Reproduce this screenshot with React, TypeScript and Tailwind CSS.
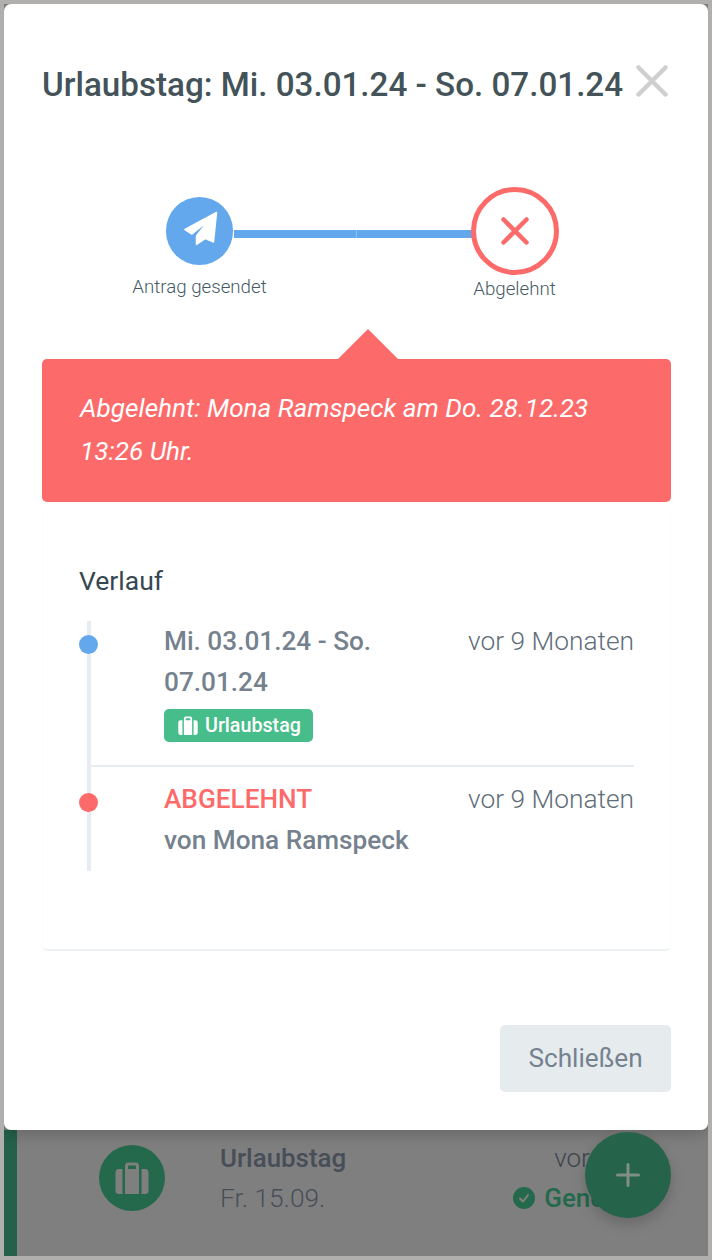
import { Plus } from "lucide-react";

function Suitcase({ className }: { className?: string }) {
  return (
    <svg viewBox="0 0 34 32" className={className} fill="currentColor">
      <path d="M10 4a3.5 3.5 0 0 1 3.5-3.5h7A3.5 3.5 0 0 1 24 4v28H10V4Zm3 .5V7h8V4.500a1 1 0 0 0-1-1h-6a1 1 0 0 0-1 1Z" fillRule="evenodd" />
      <path d="M7.500 7v25H4a3.500 3.500 0 0 1-3.500-3.500v-18A3.500 3.500 0 0 1 4 7h3.500ZM26.500 7H30a3.500 3.500 0 0 1 3.500 3.500v18A3.500 3.500 0 0 1 30 32h-3.500V7Z" />
    </svg>
  );
}

function PaperPlane() {
  return (
    <svg viewBox="0 0 36 36" className="mb-[5px] h-[36px] w-[36px]" fill="white" stroke="white" strokeWidth="1.500" strokeLinejoin="round">
      <path d="M34.500 2.500 3 19.500 10 24 26 11 14.500 26 14.500 34.500 23.500 28.500 31.500 32Z" />
    </svg>
  );
}

function HistoryRow({
  dot,
  children,
}: {
  dot: string;
  children: React.ReactNode;
}) {
  return (
    <div className="relative flex justify-between pl-[73px]">
      <div className={`absolute -left-[12px] top-[14px] h-[19px] w-[19px] rounded-full ${dot}`} />
      {children}
    </div>
  );
}

export default function App() {
  return (
    <div className="flex h-[1260px] w-[712px] flex-col overflow-hidden border-4 border-[#b1aeae] bg-[#7f7f7f] font-['Roboto',sans-serif]">
      {/* Modal */}
      <div className="relative z-10 flex h-[1126px] shrink-0 flex-col rounded-[7px] bg-white pl-[38px] pr-[37px] shadow-[0_4px_16px_rgba(0,0,0,0.2)]">
        <div className="flex items-start justify-between pt-[59px]">
          <h2 className="text-[33.2px] font-medium leading-[44px] whitespace-nowrap text-[#435359]">
            Urlaubstag: Mi. 03.01.24 - So. 07.01.24
          </h2>
          <svg viewBox="0 0 32 32" className="mr-[3px] mt-[2px] h-[32px] w-[32px] shrink-0" stroke="#cfcfcf" strokeWidth="4.500" strokeLinecap="round">
            <path d="M2.500 2.500 29.500 29.500M29.500 2.500 2.500 29.500" />
          </svg>
        </div>

        {/* Steps */}
        <div className="ml-[90.5px] mt-[80px] flex h-[119px]">
          <div className="flex w-[134px] flex-col items-center pt-[10px]">
            <div className="flex h-[67.5px] w-[67.5px] items-center justify-center rounded-full bg-[#63a8ec]">
              <PaperPlane />
            </div>
            <span className="mt-[10px] text-[18.7px] font-light leading-[24px] whitespace-nowrap text-[#455a64]">Antrag gesendet</span>
          </div>
          <div className="mx-[-33px] mt-[43px] flex h-[8px] w-[270px] shrink-0 bg-[#63a8ec]">
            <div className="ml-[122px] h-full w-px bg-[#8fc0f0]" />
          </div>
          <div className="z-10 flex w-[88px] flex-col items-center">
            <div className="flex h-[88px] w-[88px] items-center justify-center rounded-full border-[5px] border-[#fd6a6a] bg-white">
              <svg viewBox="0 0 28 28" className="h-[28px] w-[28px]" stroke="#fd6a6a" strokeWidth="4.500" strokeLinecap="round">
                <path d="M2.500 2.500 25.500 25.500M25.500 2.500 2.500 25.500" />
              </svg>
            </div>
            <span className="mt-[2px] text-[18.7px] font-light leading-[24px] whitespace-nowrap text-[#455a64]">Abgelehnt</span>
          </div>
        </div>

        {/* Rejected box */}
        <div className="relative mt-[53px] h-[143px] rounded-[5px] bg-[#fd6a6a] px-[38px] pt-[28px] text-[26.15px] italic leading-[43px] text-white">
          <div className="absolute -top-[30px] left-[296px] h-0 w-0 border-x-[30px] border-b-[30px] border-x-transparent border-b-[#fd6a6a]" />
          Abgelehnt: Mona Ramspeck am Do. 28.12.23
          <br />
          13:26 Uhr.
        </div>

        {/* History card */}
        <div className="mt-[3px] h-[446px] rounded-[5px] border-x border-b-2 border-x-[#fcfcfd] border-b-[#eef1f3] pl-[36px] pr-[36px] pt-[58px]">
          <h3 className="text-[26.5px] leading-[36px] text-[#37474f]">Verlauf</h3>
          <div className="relative ml-[8px] mt-[22px] h-[250px] border-l-4 border-[#e6ecef]">
            <HistoryRow dot="bg-[#63a8ec]">
              <div className="w-[230px] text-[26.2px] font-medium leading-[41px] text-[#75828e]">
                Mi. 03.01.24 - So. 07.01.24
                <div className="mt-[6px] flex h-[33px] w-[149px] items-center gap-[7px] rounded-[5px] bg-[#46bd8a] pl-[14px] text-[19.7px] font-medium leading-none text-white">
                  <Suitcase className="h-[19px] w-[20px]" />
                  Urlaubstag
                </div>
              </div>
              <span className="text-[26.3px] font-light leading-[41px] whitespace-nowrap text-[#5f6e7a]">vor 9 Monaten</span>
            </HistoryRow>
            <div className="mt-[23px] h-[2px] bg-[#e6ecef]" />
            <div className="pt-[12px]">
              <HistoryRow dot="bg-[#fd6a6a]">
                <div className="text-[26.2px] font-medium leading-[41px] text-[#75828e]">
                  <div className="text-[#fd6a6a]">ABGELEHNT</div>
                  von Mona Ramspeck
                </div>
                <span className="text-[26.3px] font-light leading-[41px] whitespace-nowrap text-[#5f6e7a]">vor 9 Monaten</span>
              </HistoryRow>
            </div>
          </div>
        </div>

        <div className="mt-[74px] flex justify-end">
          <button className="h-[67px] w-[171px] rounded-[5px] bg-[#e6ebee] text-[26.2px] text-[#75828e]">Schließen</button>
        </div>
      </div>

      {/* Page behind the overlay */}
      <div className="relative flex flex-1 border-l-[13px] border-[#24604a] pt-[12px]">
        <div className="ml-[82px] mt-[3px] flex h-[66px] w-[66px] items-center justify-center rounded-full bg-[#24694c] text-[#7f7f7f]">
          <Suitcase className="h-[32px] w-[34px]" />
        </div>
        <div className="ml-[55px] text-[#474e58]">
          <div className="text-[25.9px] font-medium leading-[32px]">Urlaubstag</div>
          <div className="mt-[8px] text-[26.3px] font-light leading-[32px]">Fr. 15.09.</div>
        </div>
        <div className="ml-[167px] flex flex-col text-[26px]">
          <span className="ml-[41px] font-light leading-[32px] text-[#3f4650]">vor</span>
          <span className="mt-[8px] flex items-center gap-[9px] font-medium leading-[32px] whitespace-nowrap text-[#24694c]">
            <span className="flex h-[22px] w-[22px] items-center justify-center rounded-full bg-[#24694c]">
              <svg viewBox="0 0 12 12" className="h-[12px] w-[12px]" fill="none" stroke="#7f7f7f" strokeWidth="2" strokeLinecap="round" strokeLinejoin="round">
                <path d="M2 6.500 5 9.500 10 3" />
              </svg>
            </span>
            Gene
          </span>
        </div>
        <div className="absolute left-[568px] top-[2px] z-20 flex h-[86px] w-[86px] items-center justify-center rounded-full bg-[#25634a] shadow-[0_6px_14px_rgba(0,0,0,0.18)]">
          <Plus className="h-[36px] w-[36px] text-[#7f8f88]" strokeWidth={2} />
        </div>
      </div>
    </div>
  );
}
